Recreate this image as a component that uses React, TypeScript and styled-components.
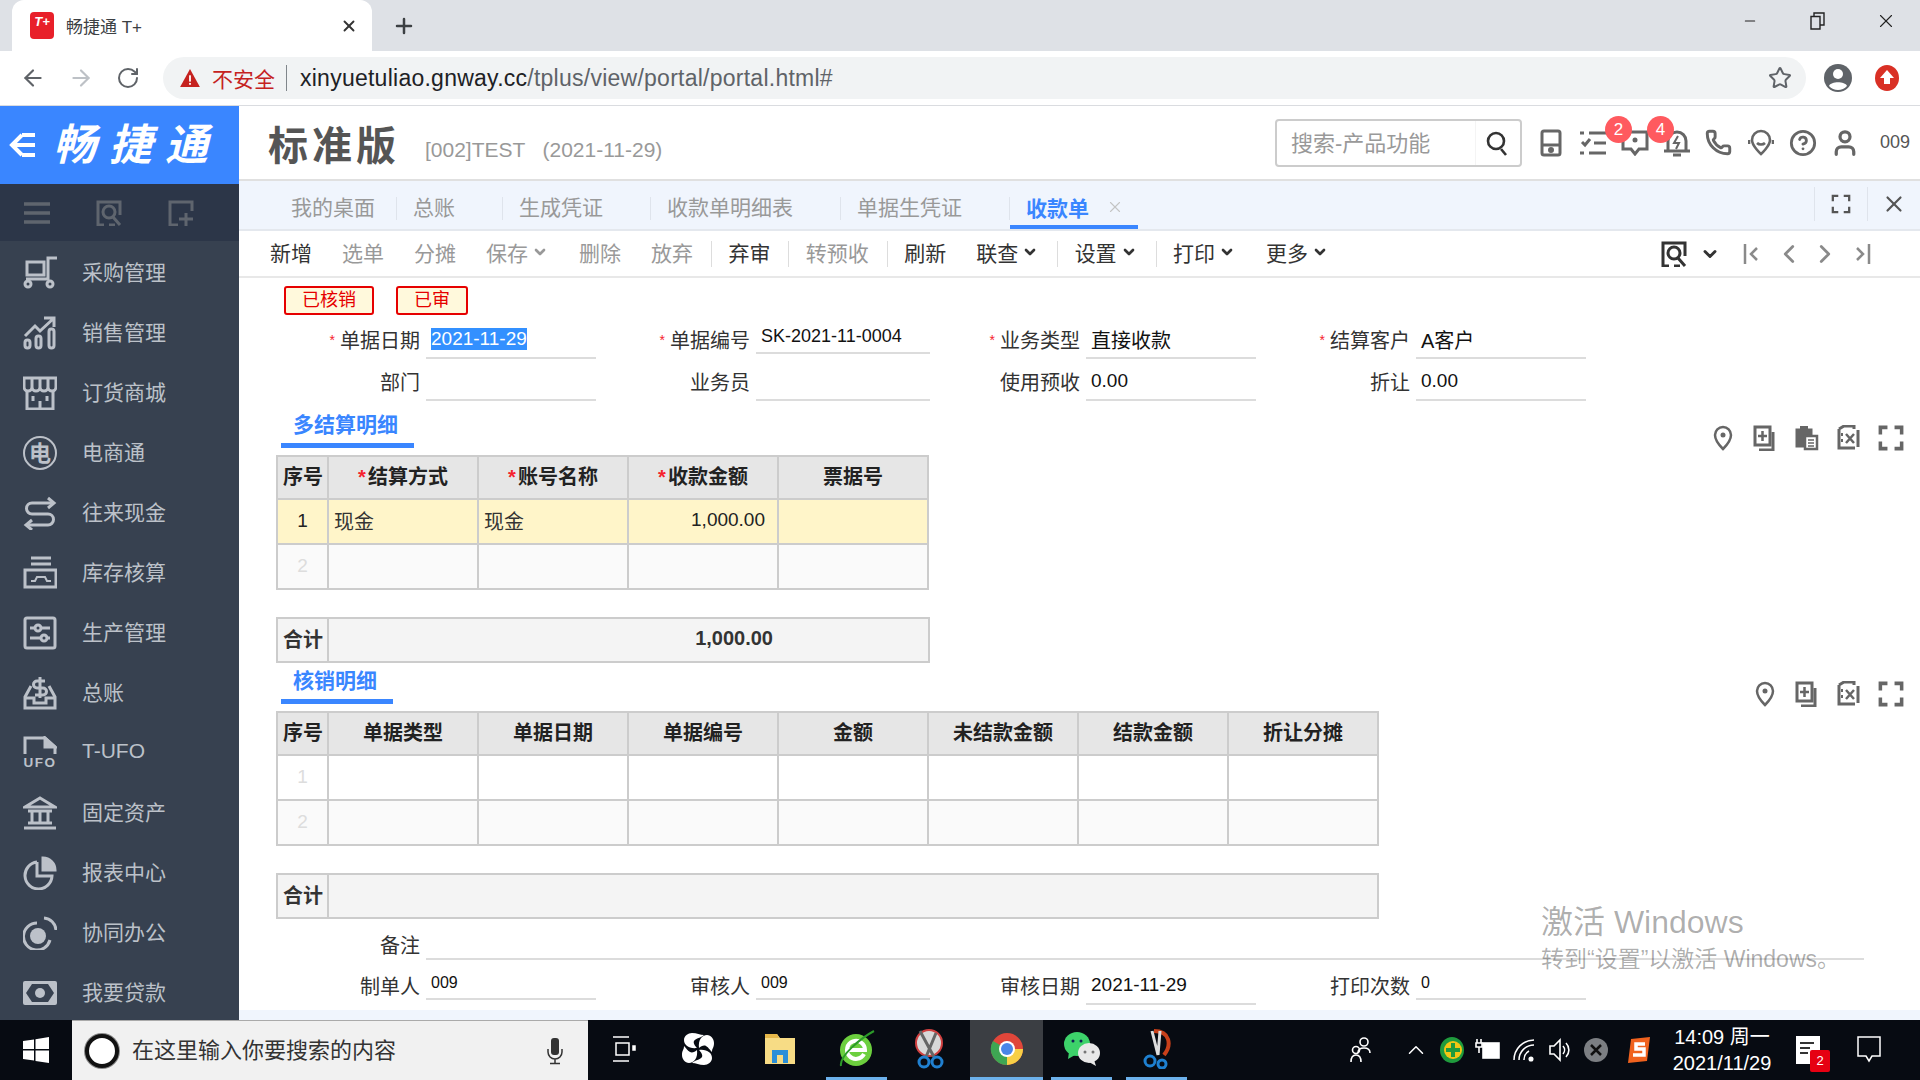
import React from 'react';
import styled, { createGlobalStyle } from 'styled-components';
import { ArrowLeft, ArrowRight, RotateCw, Star, X, Plus, Minus, ChevronDown, ChevronLeft, ChevronRight, Phone, CircleHelp, User, ChevronUp } from 'lucide-react';

const GlobalStyle = createGlobalStyle`
  html, body { margin: 0; padding: 0; background: #fff; }
  body { font-family: "Liberation Sans", "Noto Sans CJK SC", sans-serif; color: #333; }
`;

const Page = styled.div`
  position: relative;
  width: 1920px;
  height: 1080px;
  display: flex;
  flex-direction: column;
  overflow: hidden;
`;

/* browser chrome */
const TabStrip = styled.div`
  height: 51px;
  background: #dee1e6;
  display: flex;
  align-items: flex-end;
  padding-left: 12px;
  flex-shrink: 0;
`;

const BrowserTab = styled.div`
  width: 360px;
  height: 51px;
  background: #fff;
  border-radius: 12px 12px 0 0;
  display: flex;
  align-items: center;
  padding: 0 14px 0 18px;
  box-sizing: border-box;
  font-size: 17px;
  color: #3c4043;
`;

const Favicon = styled.div`
  width: 24px;
  height: 27px;
  border-radius: 4px;
  background: #e8202a;
  color: #fff;
  font-size: 13px;
  font-weight: 700;
  font-style: italic;
  text-align: center;
  line-height: 20px;
  margin-right: 12px;
  flex-shrink: 0;
`;

const TabTitle = styled.span`
  flex: 1;
`;

const NewTab = styled.div`
  margin: 0 0 13px 20px;
  display: flex;
  color: #3c4043;
`;

const WinControls = styled.div`
  margin-left: auto;
  height: 51px;
  display: flex;
  align-items: flex-start;
  padding-top: 9px;
  box-sizing: border-box;
`;

const WinBtn = styled.div`
  width: 68px;
  height: 24px;
  display: flex;
  align-items: center;
  justify-content: center;
  color: #222;
`;

const AddressRow = styled.div`
  height: 54px;
  flex-shrink: 0;
  background: #fff;
  border-bottom: 1px solid #dadce0;
  display: flex;
  align-items: center;
  padding-left: 20px;
`;

const NavBtn = styled.div<{ $off?: boolean }>`
  width: 48px;
  display: flex;
  color: ${(p) => (p.$off ? '#bdc1c6' : '#5f6368')};
`;

const Omnibox = styled.div`
  margin-left: -1px;
  width: 1643px;
  height: 42px;
  border-radius: 21px;
  background: #f1f3f4;
  display: flex;
  align-items: center;
  padding: 0 14px 0 17px;
  box-sizing: border-box;
  font-size: 23px;
  letter-spacing: 0.25px;
`;

const NotSafe = styled.span`
  color: #c5221f;
  margin-left: 12px;
  font-size: 21px;
  letter-spacing: 0;
`;

const OmniSep = styled.i`
  width: 1px;
  height: 26px;
  background: #80868b;
  margin: 0 13px 0 11px;
`;

const Host = styled.span`
  color: #202124;
`;

const UrlPath = styled.span`
  color: #5f6368;
  flex: 1;
`;

const ProfileIcons = styled.div`
  display: flex;
  align-items: center;
  margin-left: 18px;
  gap: 23px;
`;

/* app */
const Main = styled.div`
  flex: 1;
  display: flex;
  min-height: 0;
`;

const Side = styled.aside`
  width: 239px;
  flex-shrink: 0;
  background: #374150;
  display: flex;
  flex-direction: column;
  overflow: hidden;
`;

const Logo = styled.div`
  height: 78px;
  flex-shrink: 0;
  background: #3a86ff;
  display: flex;
  align-items: center;
  padding-left: 8px;
  color: #fff;
`;

const LogoText = styled.span`
  font-size: 43px;
  font-weight: 700;
  font-style: italic;
  letter-spacing: 13px;
  margin-left: 17px;
  padding-bottom: 8px;
  white-space: nowrap;
`;

const SideTools = styled.div`
  height: 57px;
  flex-shrink: 0;
  background: #2c3648;
  display: flex;
  align-items: center;
  padding-left: 24px;
  gap: 46px;
  margin-bottom: 2px;
  color: #5f656e;
`;

const SideItem = styled.div`
  height: 60px;
  flex-shrink: 0;
  display: flex;
  align-items: center;
  padding-left: 23px;
  gap: 25px;
  color: #bcc1c9;
  font-size: 21px;
`;

const SideLabel = styled.span`
  padding-bottom: 5px;
`;

const Content = styled.div`
  flex: 1;
  display: flex;
  flex-direction: column;
  min-width: 0;
`;

const Header = styled.header`
  height: 73px;
  flex-shrink: 0;
  border-bottom: 2px solid #e0e0e0;
  display: flex;
  align-items: center;
  padding: 0 10px 0 29px;
`;

const Edition = styled.h1`
  margin: 0;
  font-size: 40px;
  font-weight: 700;
  letter-spacing: 4px;
  color: #555;
`;

const Account = styled.span`
  margin: 14px 0 0 25px;
  font-size: 21px;
  color: #999;
  white-space: pre;
`;

const SearchBox = styled.div`
  margin-left: auto;
  width: 247px;
  height: 48px;
  box-sizing: border-box;
  border: 2px solid #ccc;
  border-radius: 4px;
  display: flex;
  align-items: center;
  font-size: 22px;
  color: #999;
  padding-left: 14px;
`;

const SearchHint = styled.span`
  flex: 1;
  height: 100%;
  line-height: 46px;
  border-right: 1px solid #f4f4f4;
`;

const SearchBtn = styled.div`
  width: 44px;
  display: flex;
  justify-content: center;
  color: #333;
`;

const HeadIcon = styled.div`
  position: relative;
  width: 42px;
  height: 42px;
  display: flex;
  align-items: center;
  justify-content: center;
  color: #666;
`;

const HeadIcons = styled.div`
  display: flex;
  margin-left: 8px;
`;

const RedDot = styled.span`
  position: absolute;
  left: -9px;
  top: -6px;
  width: 27px;
  height: 27px;
  border-radius: 50%;
  background: #ff5a5f;
  color: #fff;
  font-size: 17px;
  line-height: 27px;
  text-align: center;
`;

const UserCode = styled.span`
  margin-left: 14px;
  font-size: 18px;
  color: #555;
`;

const TabBar = styled.nav`
  height: 48px;
  flex-shrink: 0;
  background: #f0f5fd;
  border-bottom: 2px solid #e4e8ee;
  display: flex;
  align-items: stretch;
  padding-left: 52px;
  font-size: 21px;
  color: #999;
`;

const PageTab = styled.div<{ $first?: boolean }>`
  position: relative;
  display: flex;
  align-items: center;
  white-space: nowrap;
  padding: ${(p) => (p.$first ? '2px 22px 0 0' : '2px 48px 0 16px')};
  &::after {
    content: '';
    position: absolute;
    right: 0;
    top: 16px;
    width: 1px;
    height: 23px;
    background: #dfe4ec;
  }
`;

const CurrentTab = styled.div`
  width: 128px;
  box-sizing: border-box;
  border-bottom: 4px solid #3a86ff;
  display: flex;
  align-items: center;
  gap: 17px;
  padding: 7px 0 0 16px;
  color: #3a86ff;
  font-weight: 700;
  svg {
    color: #c4c4c4;
  }
`;

const TabTools = styled.div`
  margin-left: auto;
  display: flex;
  align-items: flex-start;
  padding-top: 6px;
  color: #555;
`;

const TabTool = styled.div`
  width: 52px;
  height: 34px;
  border-left: 1px solid #dfe4ec;
  display: flex;
  align-items: center;
  justify-content: center;
`;

const Toolbar = styled.div`
  height: 45px;
  box-sizing: content-box;
  flex-shrink: 0;
  border-bottom: 2px solid #e8e8e8;
  display: flex;
  align-items: center;
  gap: 30px;
  padding: 0 41px 0 31px;
  font-size: 21px;
  color: #333;
`;

const Tool = styled.span<{ $off?: boolean }>`
  display: inline-flex;
  align-items: center;
  gap: 4px;
  white-space: nowrap;
  margin-top: -4px;
  color: ${(p) => (p.$off ? '#999' : '#333')};
  svg {
    margin-right: 1px;
  }
`;

const ToolSep = styled.i`
  width: 1px;
  height: 26px;
  background: #ddd;
  margin: 0 -13.6px 0 -12px;
`;

const ToolNav = styled.div`
  margin-left: auto;
  display: flex;
  align-items: center;
`;

const NavIcon = styled.div<{ $off?: boolean; $wide?: boolean }>`
  width: 36px;
  display: flex;
  justify-content: center;
  color: ${(p) => (p.$off ? '#8a8a8a' : '#333')};
  margin-right: ${(p) => (p.$wide ? '7px' : '0')};
`;

const Body = styled.main`
  flex: 1;
  min-height: 0;
  overflow: hidden;
  padding: 8px 15px 0 37px;
`;

const Stamps = styled.div`
  display: flex;
  gap: 22px;
  margin: 0 0 2px 8px;
`;

const Stamp = styled.span<{ $w: number }>`
  width: ${(p) => p.$w}px;
  height: 29px;
  box-sizing: border-box;
  border: 2px solid #e60000;
  border-radius: 3px;
  background: #fff9dc;
  color: #e60000;
  font-size: 18px;
  line-height: 25px;
  text-align: center;
`;

const FieldRow = styled.div<{ $h: number }>`
  height: ${(p) => p.$h}px;
  display: grid;
  grid-template-columns: 144px 170px 148px 174px 144px 170px 148px 170px;
  column-gap: 6px;
`;

const RemarkRow = styled(FieldRow)`
  grid-template-columns: 144px 1438px;
`;

const Label = styled.label<{ $low?: boolean }>`
  align-self: end;
  height: 30px;
  box-sizing: border-box;
  padding-bottom: ${(p) => (p.$low ? '2px' : '9px')};
  display: flex;
  align-items: center;
  justify-content: flex-end;
  font-size: 20px;
  color: #333;
  white-space: nowrap;
`;

const Req = styled.span`
  color: #f5222d;
  font-size: 14px;
  margin-right: 5px;
`;

const Input = styled.div<{ $short?: boolean; $size?: number }>`
  align-self: end;
  height: 30px;
  box-sizing: border-box;
  border-bottom: 2px solid #dcdcdc;
  display: flex;
  align-items: center;
  white-space: nowrap;
  padding: 0 0 ${(p) => (p.$short ? '3px' : '8px')} 5px;
  margin-bottom: ${(p) => (p.$short ? '5px' : '0')};
  font-size: ${(p) => p.$size || 19}px;
  color: #111;
`;

const Selected = styled.span`
  background: #3390ff;
  color: #fff;
  line-height: 22px;
`;

const SectionHead = styled.div<{ $pull?: boolean }>`
  height: 47px;
  margin: ${(p) => (p.$pull ? '-6px' : '0')} 0 7px;
  display: flex;
  justify-content: space-between;
  padding-left: 5px;
`;

const SectionTitle = styled.h3`
  margin: 0;
  box-sizing: border-box;
  height: 47px;
  padding: 11px 16px 0 12px;
  border-bottom: 5px solid #3a86ff;
  font-size: 21px;
  line-height: 26px;
  font-weight: 700;
  color: #3a86ff;
`;

const SectionTools = styled.div`
  display: flex;
  gap: 14px;
  margin-top: 24px;
  color: #666;
`;

const SectionTool = styled.div`
  width: 28px;
  height: 26px;
  display: flex;
  justify-content: center;
`;

const Grid = styled.table<{ $w: number }>`
  width: ${(p) => p.$w}px;
  table-layout: fixed;
  border-collapse: collapse;
  font-size: 20px;
  th, td {
    border: 2px solid #ccc;
    overflow: hidden;
    white-space: nowrap;
  }
  td {
    height: 40px;
    padding: 0 5px 3px;
  }
  th {
    height: 37px;
    padding: 0 5px 4px;
    background: #e6e6e6;
    font-weight: 700;
    color: #222;
    text-align: center;
  }
`;

const GridStar = styled.span`
  color: #f5222d;
  margin-right: 2px;
`;

const NoCell = styled.td<{ $on?: boolean }>`
  && {
    text-align: center;
    padding: 0 0 2px;
    color: ${(p) => (p.$on ? '#222' : '#ddd')};
    font-size: 19px;
  }
`;

const Row = styled.tr<{ $bg: string }>`
  td {
    background: ${(p) => p.$bg};
  }
`;

const Money = styled.td`
  && {
    text-align: right;
    padding-right: 12px;
    font-size: 19px;
    color: #222;
  }
`;

const TotalGrid = styled(Grid)`
  margin-top: 27px;
  td {
    height: 39px;
    background: #f4f4f4;
    font-weight: 700;
    color: #333;
  }
`;

const TotalValue = styled.td`
  && {
    text-align: right;
    padding-right: 155px;
  }
`;

const FootBand = styled.div`
  height: 10px;
  flex-shrink: 0;
  background: #f0f5fd;
`;

const Watermark = styled.div`
  position: absolute;
  left: 1541px;
  top: 902px;
  color: rgba(0, 0, 0, 0.33);
  font-size: 23px;
  line-height: 34px;
  pointer-events: none;
`;

const WatermarkTitle = styled.div`
  font-size: 32px;
  line-height: 40px;
`;

/* taskbar */
const Taskbar = styled.footer`
  height: 60px;
  flex-shrink: 0;
  background: #070b12;
  display: flex;
  align-items: stretch;
  color: #fff;
`;

const StartBtn = styled.div`
  width: 72px;
  display: flex;
  align-items: center;
  justify-content: center;
`;

const TaskSearch = styled.div`
  width: 516px;
  background: #f1f1f1;
  border-top: 1px solid #aaa;
  box-sizing: border-box;
  display: flex;
  align-items: center;
  padding: 0 24px 0 13px;
  font-size: 22px;
  color: #333;
`;

const Cortana = styled.i`
  width: 34px;
  height: 34px;
  box-sizing: border-box;
  border: 4px solid #111;
  box-shadow: 0 0 0 1px #888;
  border-radius: 50%;
  margin-right: 13px;
  background: #fff;
`;

const SearchHintBar = styled.span`
  flex: 1;
  padding-bottom: 5px;
`;

const TaskSlot = styled.div<{ $w: number; $open?: boolean; $active?: boolean; $ml?: number }>`
  width: ${(p) => p.$w}px;
  margin-left: ${(p) => p.$ml || 0}px;
  box-sizing: border-box;
  display: flex;
  align-items: center;
  justify-content: center;
  background: ${(p) => (p.$active ? '#3b3e43' : 'transparent')};
  border-bottom: 3px solid ${(p) => (p.$open ? '#6cb1eb' : 'transparent')};
`;

const Tray = styled.div`
  margin-left: auto;
  display: flex;
  align-items: center;
  padding-right: 33px;
`;

const TrayIcon = styled.div<{ $ml?: number; $mr?: number }>`
  position: relative;
  width: 36px;
  display: flex;
  justify-content: center;
  margin-left: ${(p) => p.$ml || 0}px;
  margin-right: ${(p) => p.$mr || 0}px;
`;

const Clock = styled.div`
  width: 104px;
  margin-left: 13px;
  text-align: center;
  font-size: 20px;
  line-height: 26px;
  white-space: nowrap;
`;

const NotifyCount = styled.span`
  position: absolute;
  right: -4px;
  bottom: -8px;
  width: 20px;
  height: 22px;
  background: #e60012;
  border-radius: 2px;
  font-size: 13px;
  line-height: 22px;
  text-align: center;
`;

type SvgProps = { w?: number; h?: number; vb?: string; sw?: number; children: React.ReactNode };

const Ico: React.FC<SvgProps> = ({ w = 34, h = 34, vb, sw = 3, children }) => (
  <svg width={w} height={h} viewBox={vb || `0 0 ${w} ${h}`} fill="none" stroke="currentColor" strokeWidth={sw}>
    {children}
  </svg>
);

const sideIcons: React.ReactNode[] = [
  <Ico key="cart">
    <path d="M34 2H25V23H3" />
    <rect x="4" y="6" width="17" height="13" />
    <circle cx="5" cy="28" r="3" />
    <circle cx="27" cy="28" r="3" />
  </Ico>,
  <Ico key="chart">
    <rect x="2" y="24" width="5" height="8" rx="2.5" />
    <rect x="13" y="20" width="5" height="12" rx="2.5" />
    <rect x="26" y="13" width="5" height="19" rx="2.5" />
    <path d="M2 20L12 10l5 5L30 3M21 2h10v9" />
  </Ico>,
  <Ico key="shop">
    <path d="M1 2H33V11a4 4 0 0 1-8 0a4 4 0 0 1-8 0a4 4 0 0 1-8 0a4 4 0 0 1-8 0zM9 2V11M17 2V11M25 2V11" />
    <path d="M4 14V33H30V14M10 20v5M24 20v5M17 25v7" />
  </Ico>,
  <Ico key="dian" sw={2}>
    <circle cx="17" cy="17" r="16" />
    <text x="17" y="25" fontSize="22" fontWeight="700" fill="currentColor" stroke="none" textAnchor="middle">电</text>
  </Ico>,
  <Ico key="loop">
    <path d="M30 7H9a5.5 5.5 0 0 0 0 11H25a5.5 5.5 0 0 1 0 11H4" />
    <path d="M25 2l6 5-6 5M9 24l-6 5 6 5" />
  </Ico>,
  <Ico key="stock">
    <path d="M8 2H28M8 8H28" />
    <rect x="2" y="14" width="31" height="17" />
    <path d="M8 25h4l2-4h8l2 4h4" strokeWidth="2" />
  </Ico>,
  <Ico key="prod">
    <rect x="2" y="2" width="30" height="30" rx="2" />
    <path d="M7 12H27M7 22H27" />
    <circle cx="15" cy="12" r="3" fill="#374150" />
    <circle cx="21" cy="22" r="3" fill="#374150" />
  </Ico>,
  <Ico key="ledger">
    <path d="M8 10L2 21V32H32V21L26 10" />
    <path d="M2 22H11V27H23V22H32" />
    <path d="M22 5H14a3 3 0 0 0 0 7h6a3 3 0 0 1 0 7H12M17 1v21" />
  </Ico>,
  <Ico key="ufo">
    <path d="M2 18V2H22L32 11V18" />
    <path d="M22 2L32 11H22z" fill="currentColor" />
    <text x="17" y="31" fontSize="13.5" fontWeight="700" fill="currentColor" stroke="none" textAnchor="middle" letterSpacing="1.5">UFO</text>
  </Ico>,
  <Ico key="bank">
    <path d="M17 2L32 11H2z" />
    <path d="M9 14V27M17 14V27M25 14V27M5 15H29M5 27H29" />
    <path d="M1 32H33" />
  </Ico>,
  <Ico key="pie">
    <path d="M14 6A13.5 13.5 0 1 0 29 20H14V6" />
    <path d="M20 2a12 12 0 0 1 12 12H20z" fill="currentColor" />
  </Ico>,
  <Ico key="collab">
    <path d="M27 24A13.5 13.5 0 1 1 14 7" />
    <circle cx="15" cy="20" r="8" fill="currentColor" stroke="none" />
    <path d="M21 2a13 13 0 0 1 12 12" />
  </Ico>,
  <Ico key="loan">
    <rect x="0" y="5" width="34" height="24" rx="2" fill="currentColor" stroke="none" />
    <path d="M9 8H25L31 17L25 26H9L3 17z" fill="#374150" stroke="none" />
    <circle cx="17" cy="17" r="5" fill="currentColor" stroke="none" />
  </Ico>,
];

const sideLabels = ['采购管理', '销售管理', '订货商城', '电商通', '往来现金', '库存核算', '生产管理', '总账', 'T-UFO', '固定资产', '报表中心', '协同办公', '我要贷款'];

const FindDoc = ({ size = 26 }: { size?: number }) => (
  <Ico w={size} h={size} vb="0 0 26 26" sw={3}>
    <path d="M8 25H2V2H24V15" />
    <circle cx="13" cy="12" r="6" />
    <path d="M17 17l7 8M13 25h6" />
  </Ico>
);

const Fullscreen = ({ size = 22, sw = 3 }: { size?: number; sw?: number }) => (
  <Ico w={size} h={size} vb="0 0 22 22" sw={sw}>
    <path d="M8 2H2V8M14 2H20V8M2 14V20H8M20 14V20H14" />
  </Ico>
);

const DocBack = () => <path d="M20 7V25H6" />;

const Pin = () => (
  <Ico w={20} h={26} sw={2.5}>
    <path d="M10 2a8 8 0 0 0-8 8c0 6 8 14 8 14s8-8 8-14a8 8 0 0 0-8-8z" />
    <circle cx="10" cy="10" r="2.5" fill="currentColor" stroke="none" />
  </Ico>
);

const DocAdd = () => (
  <Ico w={24} h={26} sw={3}>
    <rect x="2" y="2" width="15" height="18" />
    <path d="M9.5 6v10M5 11h9" strokeWidth="2.5" />
    <DocBack />
  </Ico>
);

const DocPaste = () => (
  <Ico w={24} h={26} sw={3}>
    <path d="M2 5H16V21H2z" fill="currentColor" />
    <rect x="5" y="1" width="8" height="5" fill="currentColor" stroke="none" />
    <rect x="10" y="11" width="12" height="13" fill="#fff" strokeWidth="2.5" />
    <path d="M13 15h6M13 18h6M13 21h6" strokeWidth="1.5" />
  </Ico>
);

const DocXls = () => (
  <Ico w={24} h={26} sw={3}>
    <path d="M2 4V23H18M2 4L7 1H17V4" />
    <path d="M9 9l8 9M17 9l-8 9" strokeWidth="2.5" />
    <path d="M5 8v3M5 14v3" strokeWidth="2" />
    <path d="M21 5V22" />
  </Ico>
);

const sectionOneTools = [<Pin key="p" />, <DocAdd key="a" />, <DocPaste key="c" />, <DocXls key="x" />, <Fullscreen key="f" size={26} />];
const sectionTwoTools = [<Pin key="p" />, <DocAdd key="a" />, <DocXls key="x" />, <Fullscreen key="f" size={26} />];

const Chevron = () => <ChevronDown size={16} strokeWidth={4} />;

const Taskicons = {
  fan: (
    <svg width="34" height="34" viewBox="0 0 34 34" fill="#fff">
      <path d="M16 16C8 17 3 13 3 8c0-4 4-7 8-7 5 0 8 2 12 2-3 3-8 3-10 6-1 2 1 5 3 7zM18 18c8-1 13 3 13 8 0 4-4 7-8 7-5 0-8-2-12-2 3-3 8-3 10-6 1-2-1-5-3-7z" />
      <path d="M18 16c-1-8 3-13 8-13 4 0 7 4 7 8 0 5-2 5-2 9-3-3-3-4-6-6-2-1-5 0-7 2zM16 18c1 8-3 13-8 13-4 0-7-4-7-8 0-5 2-5 2-9 3 3 3 4 6 6 2 1 5 0 7-2z" />
    </svg>
  ),
  folder: (
    <svg width="32" height="34" viewBox="0 0 32 34">
      <path d="M1 2H13L16 6H31V32H1z" fill="#f7dc85" />
      <path d="M1 2H13L15 6H1z" fill="#e6b84a" />
      <path d="M8 31V18H24V31H19V23H13V31z" fill="#2a8fd8" />
    </svg>
  ),
  ie: (
    <svg width="36" height="38" viewBox="0 0 36 38">
      <circle cx="17" cy="20" r="16" fill="#6ccf3e" />
      <path d="M8 20H26A9 9 0 1 0 25 24" fill="none" stroke="#fff" strokeWidth="4" />
      <path d="M2 36C0 26 22 8 35 1" fill="none" stroke="#2c9a2a" strokeWidth="2" />
    </svg>
  ),
  scissors: (
    <svg width="34" height="40" viewBox="0 0 34 40" fill="none">
      <circle cx="17" cy="14" r="13" fill="#d8d8d8" stroke="#d04040" strokeWidth="2" />
      <path d="M8 2L22 28M24 4L14 28" stroke="#666" strokeWidth="3" />
      <circle cx="12" cy="33" r="5" stroke="#2080d0" strokeWidth="3" />
      <circle cx="25" cy="33" r="5" stroke="#2080d0" strokeWidth="3" />
    </svg>
  ),
  chrome: (
    <svg width="34" height="34" viewBox="0 0 34 34">
      <circle cx="17" cy="17" r="16" fill="#e0463a" />
      <path d="M17 17L3 9A16 16 0 0 0 17 33z" fill="#3ea653" />
      <path d="M17 17H33A16 16 0 0 1 17 33z" fill="#f7cf46" />
      <circle cx="17" cy="17" r="8" fill="#fff" />
      <circle cx="17" cy="17" r="6" fill="#4a86e8" />
    </svg>
  ),
  wechat: (
    <svg width="38" height="36" viewBox="0 0 38 36">
      <ellipse cx="14" cy="13" rx="13" ry="12" fill="#3dd26a" />
      <path d="M6 21l-1 7 7-4z" fill="#3dd26a" />
      <ellipse cx="26" cy="22" rx="11" ry="10" fill="#e8e8e8" />
      <path d="M31 29l2 6-7-4z" fill="#e8e8e8" />
      <circle cx="22" cy="21" r="1.5" fill="#777" />
      <circle cx="30" cy="21" r="1.5" fill="#777" />
      <circle cx="10" cy="10" r="1.5" fill="#125" />
      <circle cx="18" cy="10" r="1.5" fill="#125" />
    </svg>
  ),
  cut: (
    <svg width="30" height="40" viewBox="0 0 30 40" fill="none">
      <path d="M12 2C28 2 30 16 22 26" stroke="#c8401a" strokeWidth="4" />
      <path d="M10 2L16 26L18 2" stroke="#ddd" strokeWidth="3" />
      <circle cx="8" cy="32" r="5" stroke="#1e80d0" strokeWidth="3" />
      <circle cx="20" cy="35" r="4" stroke="#1e80d0" strokeWidth="3" />
    </svg>
  ),
};

const detailOneRows = ['#fff5c9', '#fafafa'];
const headerTwo = ['单据类型', '单据日期', '单据编号', '金额', '未结款金额', '结款金额', '折让分摊'];

const App: React.FC = () => (
  <Page>
    <GlobalStyle />
    <TabStrip>
      <BrowserTab>
        <Favicon>T+</Favicon>
        <TabTitle>畅捷通 T+</TabTitle>
        <X size={18} strokeWidth={2.5} color="#333" />
      </BrowserTab>
      <NewTab>
        <Plus size={24} strokeWidth={2.5} />
      </NewTab>
      <WinControls>
        <WinBtn><Minus size={16} strokeWidth={1.6} /></WinBtn>
        <WinBtn>
          <Ico w={16} h={18} sw={1.4}>
            <path d="M1 4.5H10V17H1zM4 4V1H14V13H10" />
          </Ico>
        </WinBtn>
        <WinBtn><X size={22} strokeWidth={1.2} /></WinBtn>
      </WinControls>
    </TabStrip>

    <AddressRow>
      <NavBtn><ArrowLeft size={26} strokeWidth={2} /></NavBtn>
      <NavBtn $off><ArrowRight size={26} strokeWidth={2} /></NavBtn>
      <NavBtn><RotateCw size={24} strokeWidth={2} /></NavBtn>
      <Omnibox>
        <svg width="20" height="18" viewBox="0 0 22 20">
          <path d="M11 0L22 20H0z" fill="#c5221f" />
          <rect x="10" y="7" width="2" height="7" fill="#fff" />
          <rect x="10" y="15.5" width="2" height="2" fill="#fff" />
        </svg>
        <NotSafe>不安全</NotSafe>
        <OmniSep />
        <Host>xinyuetuliao.gnway.cc</Host>
        <UrlPath>/tplus/view/portal/portal.html#</UrlPath>
        <Star size={24} strokeWidth={2} color="#5f6368" />
      </Omnibox>
      <ProfileIcons>
        <svg width="28" height="28" viewBox="0 0 28 28">
          <circle cx="14" cy="14" r="14" fill="#5f6368" />
          <circle cx="14" cy="10" r="5" fill="#fff" />
          <path d="M5 22c2-5 16-5 18 0a12 12 0 0 1-18 0z" fill="#fff" />
        </svg>
        <svg width="24" height="28" viewBox="0 0 24 28">
          <ellipse cx="12" cy="14" rx="12" ry="13" fill="#d93025" />
          <path d="M12 6l7 8h-4v6H9v-6H5z" fill="#fff" />
        </svg>
      </ProfileIcons>
    </AddressRow>

    <Main>
      <Side>
        <Logo>
          <Ico w={28} h={26} sw={4}>
            <path d="M27 13H5M14 3L4 13l10 10M14 3h13M14 23h13" />
          </Ico>
          <LogoText>畅捷通</LogoText>
        </Logo>
        <SideTools>
          <Ico w={26} h={24} sw={3.5}>
            <path d="M0 3H26M0 12H26M0 21H26" />
          </Ico>
          <FindDoc />
          <Ico w={26} h={26} sw={3}>
            <path d="M10 25H2V2H24V11M18 13V26M11 19H25" />
          </Ico>
        </SideTools>
        {sideLabels.map((label, i) => (
          <SideItem key={label}>
            {sideIcons[i]}
            <SideLabel>{label}</SideLabel>
          </SideItem>
        ))}
      </Side>

      <Content>
        <Header>
          <Edition>标准版</Edition>
          <Account>[002]TEST   (2021-11-29)</Account>
          <SearchBox>
            <SearchHint>搜索-产品功能</SearchHint>
            <SearchBtn>
              <Ico w={24} h={28} sw={2.6}>
                <circle cx="10" cy="12" r="8" />
                <path d="M15 20l5 6" />
              </Ico>
            </SearchBtn>
          </SearchBox>
          <HeadIcons>
            <HeadIcon>
              <Ico w={22} h={28} sw={3}>
                <rect x="2" y="2" width="18" height="24" rx="2" />
                <path d="M2 16H20" />
                <circle cx="11" cy="21" r="1.5" fill="currentColor" />
              </Ico>
            </HeadIcon>
            <HeadIcon>
              <Ico w={26} h={26} sw={3}>
                <path d="M0 3H4M9 3H26M2 12l3 3 5-6M14 13H26M0 23H4M9 23H26" />
              </Ico>
            </HeadIcon>
            <HeadIcon>
              <RedDot>2</RedDot>
              <Ico w={28} h={26} sw={3}>
                <path d="M2 2H26V19H18L14 24L10 19H2z" />
                <circle cx="14" cy="10" r="2.5" fill="currentColor" stroke="none" />
              </Ico>
            </HeadIcon>
            <HeadIcon>
              <RedDot>4</RedDot>
              <Ico w={28} h={28} sw={3}>
                <path d="M5 21V12a9 9 0 0 1 18 0V21M1 22H27M10 26H18" />
                <path d="M15 7l-4 7h5l-3 6" strokeWidth="2" />
              </Ico>
            </HeadIcon>
            <HeadIcon><Phone size={27} strokeWidth={2.6} /></HeadIcon>
            <HeadIcon>
              <Ico w={26} h={28} sw={2.6}>
                <path d="M13 2a9 9 0 0 1 9 9c0 6-9 14-9 14S4 17 4 11a9 9 0 0 1 9-9z" />
                <path d="M9 14c2 2 6 2 8 0M1 11v4M25 11v4" />
              </Ico>
            </HeadIcon>
            <HeadIcon><CircleHelp size={28} strokeWidth={2.4} /></HeadIcon>
            <HeadIcon><User size={30} strokeWidth={2.6} /></HeadIcon>
          </HeadIcons>
          <UserCode>009</UserCode>
        </Header>

        <TabBar>
          <PageTab $first>我的桌面</PageTab>
          <PageTab>总账</PageTab>
          <PageTab>生成凭证</PageTab>
          <PageTab>收款单明细表</PageTab>
          <PageTab>单据生凭证</PageTab>
          <CurrentTab>
            收款单
            <X size={18} strokeWidth={1.5} />
          </CurrentTab>
          <TabTools>
            <TabTool><Fullscreen size={20} sw={2.5} /></TabTool>
            <TabTool><X size={26} strokeWidth={2} /></TabTool>
          </TabTools>
        </TabBar>

        <Toolbar>
          <Tool>新增</Tool>
          <Tool $off>选单</Tool>
          <Tool $off>分摊</Tool>
          <Tool $off>保存<Chevron /></Tool>
          <Tool $off>删除</Tool>
          <Tool $off>放弃</Tool>
          <ToolSep />
          <Tool>弃审</Tool>
          <ToolSep />
          <Tool $off>转预收</Tool>
          <ToolSep />
          <Tool>刷新</Tool>
          <Tool>联查<Chevron /></Tool>
          <ToolSep />
          <Tool>设置<Chevron /></Tool>
          <ToolSep />
          <Tool>打印<Chevron /></Tool>
          <Tool>更多<Chevron /></Tool>
          <ToolNav>
            <NavIcon><FindDoc /></NavIcon>
            <NavIcon $wide><ChevronDown size={20} strokeWidth={3.5} /></NavIcon>
            <NavIcon $off>
              <Ico w={22} h={24} sw={2.5}>
                <path d="M3 2V22M15 6l-6 6 6 6" />
              </Ico>
            </NavIcon>
            <NavIcon $off><ChevronLeft size={30} strokeWidth={2.2} /></NavIcon>
            <NavIcon $off><ChevronRight size={30} strokeWidth={2.2} /></NavIcon>
            <NavIcon $off>
              <Ico w={22} h={24} sw={2.5}>
                <path d="M19 2V22M7 6l6 6-6 6" />
              </Ico>
            </NavIcon>
          </ToolNav>
        </Toolbar>

        <Body>
          <Stamps>
            <Stamp $w={90}>已核销</Stamp>
            <Stamp $w={72}>已审</Stamp>
          </Stamps>

          <FieldRow $h={42}>
            <Label><Req>*</Req>单据日期</Label>
            <Input><Selected>2021-11-29</Selected></Input>
            <Label><Req>*</Req>单据编号</Label>
            <Input $short $size={18}>SK-2021-11-0004</Input>
            <Label><Req>*</Req>业务类型</Label>
            <Input $size={20}>直接收款</Input>
            <Label><Req>*</Req>结算客户</Label>
            <Input $size={20}>A客户</Input>
          </FieldRow>
          <FieldRow $h={42}>
            <Label>部门</Label>
            <Input />
            <Label>业务员</Label>
            <Input />
            <Label>使用预收</Label>
            <Input>0.00</Input>
            <Label>折让</Label>
            <Input>0.00</Input>
          </FieldRow>

          <SectionHead>
            <SectionTitle>多结算明细</SectionTitle>
            <SectionTools>
              {sectionOneTools.map((icon, i) => <SectionTool key={i}>{icon}</SectionTool>)}
            </SectionTools>
          </SectionHead>

          <Grid $w={652}>
            <colgroup>
              <col width={51} />
              <col span={4} width={150} />
            </colgroup>
            <thead>
              <tr>
                <th>序号</th>
                <th><GridStar>*</GridStar>结算方式</th>
                <th><GridStar>*</GridStar>账号名称</th>
                <th><GridStar>*</GridStar>收款金额</th>
                <th>票据号</th>
              </tr>
            </thead>
            <tbody>
              {detailOneRows.map((bg, i) => (
                <Row $bg={bg} key={bg}>
                  <NoCell $on={i === 0}>{i + 1}</NoCell>
                  <td>{i === 0 ? '现金' : ''}</td>
                  <td>{i === 0 ? '现金' : ''}</td>
                  <Money>{i === 0 ? '1,000.00' : ''}</Money>
                  <td />
                </Row>
              ))}
            </tbody>
          </Grid>

          <TotalGrid $w={652}>
            <colgroup>
              <col width={51} />
              <col width={601} />
            </colgroup>
            <tbody>
              <tr>
                <td>合计</td>
                <TotalValue>1,000.00</TotalValue>
              </tr>
            </tbody>
          </TotalGrid>

          <SectionHead $pull>
            <SectionTitle>核销明细</SectionTitle>
            <SectionTools>
              {sectionTwoTools.map((icon, i) => <SectionTool key={i}>{icon}</SectionTool>)}
            </SectionTools>
          </SectionHead>

          <Grid $w={1101}>
            <colgroup>
              <col width={51} />
              <col span={7} width={150} />
            </colgroup>
            <thead>
              <tr>
                <th>序号</th>
                {headerTwo.map((h) => <th key={h}>{h}</th>)}
              </tr>
            </thead>
            <tbody>
              {['#fff', '#fafafa'].map((bg, i) => (
                <Row $bg={bg} key={bg}>
                  <NoCell>{i + 1}</NoCell>
                  {headerTwo.map((h) => <td key={h} />)}
                </Row>
              ))}
            </tbody>
          </Grid>

          <TotalGrid $w={1101}>
            <colgroup>
              <col width={51} />
              <col width={1050} />
            </colgroup>
            <tbody>
              <tr>
                <td>合计</td>
                <td />
              </tr>
            </tbody>
          </TotalGrid>

          <RemarkRow $h={41}>
            <Label $low>备注</Label>
            <Input />
          </RemarkRow>
          <FieldRow $h={45}>
            <Label>制单人</Label>
            <Input $short $size={16}>009</Input>
            <Label>审核人</Label>
            <Input $short $size={16}>009</Input>
            <Label>审核日期</Label>
            <Input>2021-11-29</Input>
            <Label>打印次数</Label>
            <Input $short $size={16}>0</Input>
          </FieldRow>
        </Body>
        <FootBand />
      </Content>
    </Main>

    <Taskbar>
      <StartBtn>
        <svg width="26" height="26" viewBox="0 0 26 26" fill="#fff">
          <path d="M0 4L11 2.4V12H0zM12.5 2.2L26 0V12H12.5zM0 13.5H11V23.5L0 22zM12.5 13.5H26V26L12.5 24z" />
        </svg>
      </StartBtn>
      <TaskSearch>
        <Cortana />
        <SearchHintBar>在这里输入你要搜索的内容</SearchHintBar>
        <svg width="18" height="28" viewBox="0 0 18 28" fill="#333">
          <rect x="5" y="1" width="8" height="17" rx="3" />
          <path d="M2 12v3a7 7 0 0 0 14 0v-3M9 22v4M4 26.5h10" fill="none" stroke="#333" strokeWidth="1.5" />
        </svg>
      </TaskSearch>
      <TaskSlot $w={72}>
        <svg width="24" height="26" viewBox="0 0 24 26" fill="none" stroke="#fff" strokeWidth="1.5">
          <path d="M1 1H17M4 7H17V19H4zM1 25H17" />
          <rect x="21" y="10" width="2" height="4" fill="#fff" />
        </svg>
      </TaskSlot>
      <TaskSlot $w={76}>{Taskicons.fan}</TaskSlot>
      <TaskSlot $w={88}>{Taskicons.folder}</TaskSlot>
      <TaskSlot $w={61} $ml={2} $open>{Taskicons.ie}</TaskSlot>
      <TaskSlot $w={83}>{Taskicons.scissors}</TaskSlot>
      <TaskSlot $w={73} $open $active>{Taskicons.chrome}</TaskSlot>
      <TaskSlot $w={61} $ml={8} $open>{Taskicons.wechat}</TaskSlot>
      <TaskSlot $w={61} $ml={14} $open>{Taskicons.cut}</TaskSlot>
      <Tray>
        <TrayIcon $mr={19}>
          <Ico w={24} h={28} sw={1.6}>
            <circle cx="15" cy="6" r="4" />
            <path d="M9 17c0-4 3-5 6-5s6 1 6 5" />
            <circle cx="7" cy="14" r="3.5" />
            <path d="M2 26c0-5 2-7 5-7s5 2 5 7" />
          </Ico>
        </TrayIcon>
        <TrayIcon><ChevronUp size={26} strokeWidth={1.4} /></TrayIcon>
        <TrayIcon>
          <svg width="24" height="26" viewBox="0 0 24 26">
            <ellipse cx="12" cy="13" rx="12" ry="13" fill="#1f9b3d" />
            <ellipse cx="13" cy="13" rx="9" ry="9" fill="#f3c614" />
            <path d="M13 6v14M6 13h14" stroke="#1f9b3d" strokeWidth="4" />
          </svg>
        </TrayIcon>
        <TrayIcon>
          <Ico w={26} h={24} sw={1.6}>
            <path d="M2 1v4M6 1v4M1 5h6v4H1zM4 9v6" />
            <rect x="8" y="5" width="16" height="15" fill="#fff" />
          </Ico>
        </TrayIcon>
        <TrayIcon>
          <Ico w={24} h={24} sw={1.5}>
            <path d="M2 22A20 20 0 0 1 22 2M7 22A15 15 0 0 1 22 7M12 22A10 10 0 0 1 17 13" />
            <circle cx="19" cy="21" r="1.8" fill="#fff" />
          </Ico>
        </TrayIcon>
        <TrayIcon>
          <Ico w={24} h={26} sw={1.6}>
            <path d="M2 9H6L12 3V23L6 17H2z" />
            <path d="M15 9a6 6 0 0 1 0 8M18 6a10 10 0 0 1 0 14" />
          </Ico>
        </TrayIcon>
        <TrayIcon>
          <svg width="24" height="24" viewBox="0 0 24 24">
            <circle cx="12" cy="12" r="12" fill="#7c7f83" />
            <path d="M7 7l10 10M17 7L7 17" stroke="#111" strokeWidth="2.5" />
          </svg>
        </TrayIcon>
        <TrayIcon $ml={7}>
          <svg width="24" height="26" viewBox="0 0 24 26">
            <path d="M4 2L23 0L20 24L1 26z" fill="#f0621e" />
            <path d="M18 7H9v5h8v6H6" fill="none" stroke="#fff" strokeWidth="3.5" />
          </svg>
        </TrayIcon>
        <Clock>
          14:09 周一
          <br />
          2021/11/29
        </Clock>
        <TrayIcon $ml={16}>
          <svg width="24" height="28" viewBox="0 0 24 28">
            <rect width="24" height="28" fill="#fff" />
            <path d="M4 7H18M4 12H14M4 17H12" stroke="#333" strokeWidth="2" />
          </svg>
          <NotifyCount>2</NotifyCount>
        </TrayIcon>
        <TrayIcon $ml={25}>
          <Ico w={26} h={28} sw={1.5}>
            <path d="M2 1H24V20H16L13 25L10 20H2z" />
          </Ico>
        </TrayIcon>
      </Tray>
    </Taskbar>

    <Watermark>
      <WatermarkTitle>激活 Windows</WatermarkTitle>
      转到“设置”以激活 Windows。
    </Watermark>
  </Page>
);

export default App;
